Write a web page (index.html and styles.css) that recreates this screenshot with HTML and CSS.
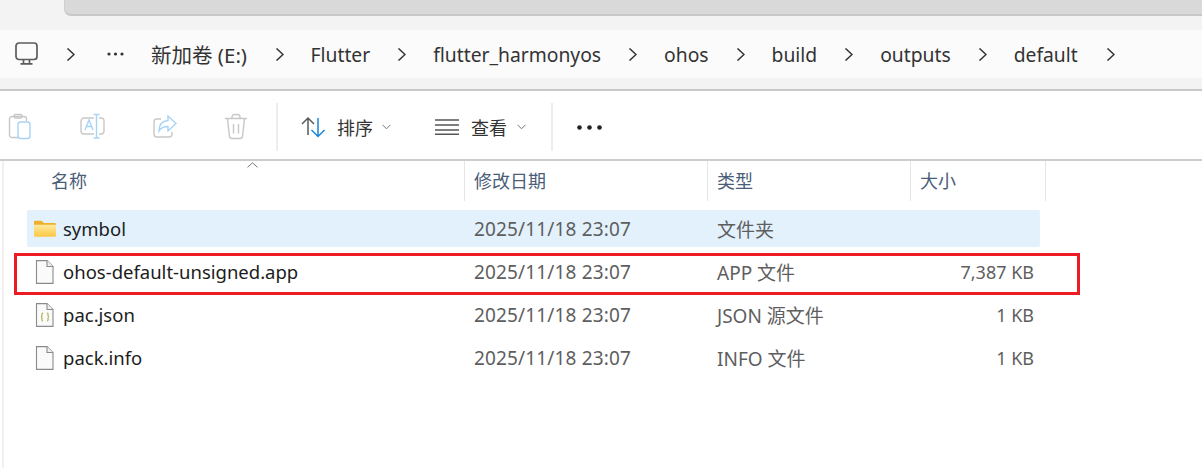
FILE: index.html
```html
<!DOCTYPE html>
<html lang="zh-CN">
<head>
    <meta charset="UTF-8">
    <title>default</title>
    <link rel="stylesheet" href="styles.css">
</head>
<body>
    <div class="tabstrip"><div class="tab"></div></div>

    <div class="address-wrap">
        <div class="address">
            <svg class="pc" width="24" height="24" viewBox="0 0 24 24" fill="none" stroke="#5c5c5c" stroke-width="1.7">
                <rect x="1" y="1" width="21" height="16.500" rx="3"/>
                <path d="M8.500 18v3.500M14.500 18v3.500M5.500 21.800h12"/>
            </svg>
            <svg class="chev" width="9" height="13" viewBox="0 0 9 13"><path d="M1.500 .5l6.500 6-6.500 6"/></svg>
            <svg class="dots" width="17" height="4" viewBox="0 0 17 4"><circle cx="2" cy="2" r="1.600"/><circle cx="8.500" cy="2" r="1.600"/><circle cx="15" cy="2" r="1.600"/></svg>
            <span class="crumb drive">新加卷 (E:)</span>
            <svg class="chev" width="9" height="13" viewBox="0 0 9 13"><path d="M1.500 .5l6.500 6-6.500 6"/></svg>
            <span class="crumb">Flutter</span>
            <svg class="chev" width="9" height="13" viewBox="0 0 9 13"><path d="M1.500 .5l6.500 6-6.500 6"/></svg>
            <span class="crumb">flutter_harmonyos</span>
            <svg class="chev" width="9" height="13" viewBox="0 0 9 13"><path d="M1.500 .5l6.500 6-6.500 6"/></svg>
            <span class="crumb">ohos</span>
            <svg class="chev" width="9" height="13" viewBox="0 0 9 13"><path d="M1.500 .5l6.500 6-6.500 6"/></svg>
            <span class="crumb">build</span>
            <svg class="chev" width="9" height="13" viewBox="0 0 9 13"><path d="M1.500 .5l6.500 6-6.500 6"/></svg>
            <span class="crumb">outputs</span>
            <svg class="chev" width="9" height="13" viewBox="0 0 9 13"><path d="M1.500 .5l6.500 6-6.500 6"/></svg>
            <span class="crumb last">default</span>
            <svg class="chev" width="9" height="13" viewBox="0 0 9 13"><path d="M1.500 .5l6.500 6-6.500 6"/></svg>
        </div>
    </div>

    <div class="toolbar">
        <div class="tool-icons">
            <svg width="26" height="28" viewBox="0 0 26 28" fill="none" stroke-width="1.4">
                <path d="M10 24.500H4a2.500 2.500 0 0 1-2.500-2.500V6A2.500 2.500 0 0 1 4 3.500h12A2.500 2.500 0 0 1 18.500 6v2" stroke="#c8c8c8"/>
                <rect x="6" y="1.500" width="8" height="3.500" rx="1.500" stroke="#c8c8c8"/>
                <rect x="10" y="9" width="12" height="16.500" rx="2.500" stroke="#a9d3f5"/>
            </svg>
            <svg width="26" height="28" viewBox="0 0 26 28" fill="none" stroke-width="1.4">
                <path d="M14 5H4a3 3 0 0 0-3 3v10a3 3 0 0 0 3 3h10M19 5h2a3 3 0 0 1 3 3v10a3 3 0 0 1-3 3h-2" stroke="#c8c8c8"/>
                <path d="M13.500 1.500h6M16.500 1.500v23M13.500 25h6" stroke="#a9d3f5"/>
                <path d="M5 17l4-10 4 10M6.500 13.500h5" stroke="#a9d3f5"/>
            </svg>
            <svg width="26" height="28" viewBox="0 0 26 28" fill="none" stroke-width="1.4">
                <path d="M9 6H5a3 3 0 0 0-3 3v12a3 3 0 0 0 3 3h12a3 3 0 0 0 3-3v-2" stroke="#c8c8c8"/>
                <path d="M16 3l8 7.500-8 7.500v-4.500c-4 0-7 1-9 4.500 0-6 3-10 9-10.500z" stroke="#a9d3f5"/>
            </svg>
            <svg width="26" height="28" viewBox="1 0 26 28" fill="none" stroke="#c8c8c8" stroke-width="1.4">
                <path d="M2 5.500h22M9 5.500V4a2.500 2.500 0 0 1 2.500-2.500h3A2.500 2.500 0 0 1 17 4v1.500M4.500 5.500l2 18a2.500 2.500 0 0 0 2.500 2h8a2.500 2.500 0 0 0 2.500-2l2-18M10.500 11v9.500M15.500 11v9.500"/>
            </svg>
        </div>
        <div class="tool-sep"></div>
        <div class="tool-btn sort">
            <svg width="25" height="22" viewBox="0 0 25 22" fill="none" stroke-width="1.5">
                <path d="M7 19V2M1 8l6-6 6 6" stroke="#5a5a5a"/>
                <path d="M17 2v18M10.500 14l6.500 6.500 6.500-6.500" stroke="#1a86d8"/>
            </svg>
            <span>排序</span>
            <svg class="caret" width="9" height="6" viewBox="0 0 9 6"><path d="M.5 .8l4 4 4-4"/></svg>
        </div>
        <div class="tool-btn view">
            <svg width="24" height="16" viewBox="0 0 24 16" stroke="#555" stroke-width="1.4">
                <path d="M0 1h24M0 6h24M0 11h24M0 15.300h24"/>
            </svg>
            <span>查看</span>
            <svg class="caret" width="9" height="6" viewBox="0 0 9 6"><path d="M.5 .8l4 4 4-4"/></svg>
        </div>
        <div class="tool-sep second"></div>
        <svg class="more" width="25" height="5" viewBox="0 0 25 5"><circle cx="2.500" cy="2.500" r="2.300"/><circle cx="12.500" cy="2.500" r="2.300"/><circle cx="22.500" cy="2.500" r="2.300"/></svg>
    </div>

    <div class="files">
        <div class="head">
            <div class="head-name">名称<svg class="sort-mark" width="11" height="6" viewBox="0 0 11 6"><path d="M.5 5.300l5-4.500 5 4.500"/></svg></div>
            <div class="head-cell">修改日期</div>
            <div class="head-cell">类型</div>
            <div class="head-cell">大小</div>
        </div>

        <div class="rows">
            <div class="row selected">
                <div class="name">
                    <svg class="folder" width="22" height="17" viewBox="0 0 24 18">
                        <defs>
                            <linearGradient id="folderFill" x1="0" y1="0" x2="0" y2="1">
                                <stop offset="0" stop-color="#ffe9a0"/>
                                <stop offset="1" stop-color="#fbc842"/>
                            </linearGradient>
                        </defs>
                        <path d="M0 2a1.500 1.500 0 0 1 1.500-1.500h6.500l3 2.500h11.500A1.500 1.500 0 0 1 24 4.500V6H0z" fill="#eeb02a"/>
                        <path d="M0 5h24v11.500a1.500 1.500 0 0 1-1.500 1.500h-21A1.500 1.500 0 0 1 0 16.500z" fill="url(#folderFill)"/>
                    </svg>
                    symbol
                </div>
                <div class="cell date">2025/11/18 23:07</div>
                <div class="cell type">文件夹</div>
                <div class="cell size"></div>
            </div>
            <div class="row">
                <div class="name">
                    <svg width="24" height="24" viewBox="0 0 24 24" fill="#fafafa" stroke="#8a8a8a" stroke-width="1.1">
                        <path d="M3.500 .6h10.500L20 6.500V23.400H3.500z"/><path d="M14 .6V6.500h6" fill="#eee"/>
                    </svg>
                    ohos-default-unsigned.app
                </div>
                <div class="cell date">2025/11/18 23:07</div>
                <div class="cell type">APP 文件</div>
                <div class="cell size">7,387 KB</div>
            </div>
            <div class="row">
                <div class="name">
                    <svg width="24" height="24" viewBox="0 0 24 24" fill="#fafafa" stroke="#8a8a8a" stroke-width="1.1">
                        <path d="M3.500 .6h10.500L20 6.500V23.400H3.500z"/><path d="M14 .6V6.500h6" fill="#eee"/>
                        <path d="M10 10c-1.500 0-1 1.500-1 2.500s-.5 1.500-1 1.500c.5 0 1 .5 1 1.500s-.5 2.500 1 2.500M14 10c1.500 0 1 1.500 1 2.500s.5 1.500 1 1.500c-.5 0-1 .5-1 1.500s.5 2.500-1 2.500" fill="none" stroke="#a9ad3c"/>
                    </svg>
                    pac.json
                </div>
                <div class="cell date">2025/11/18 23:07</div>
                <div class="cell type">JSON 源文件</div>
                <div class="cell size">1 KB</div>
            </div>
            <div class="row">
                <div class="name">
                    <svg width="24" height="24" viewBox="0 0 24 24" fill="#fafafa" stroke="#8a8a8a" stroke-width="1.1">
                        <path d="M3.500 .6h10.500L20 6.500V23.400H3.500z"/><path d="M14 .6V6.500h6" fill="#eee"/>
                    </svg>
                    pack.info
                </div>
                <div class="cell date">2025/11/18 23:07</div>
                <div class="cell type">INFO 文件</div>
                <div class="cell size">1 KB</div>
            </div>
            <div class="mark"></div>
        </div>
    </div>
</body>
</html>
```

FILE: styles.css
```css
html, body {
    margin: 0;
    height: 468px;
    overflow: hidden;
    background-color: #fff;
}
body {
    font-family: "Noto Sans", "Noto Sans CJK SC", sans-serif;
    font-size: 18.5px;
    color: #1c1c1c;
}
.tabstrip {
    height: 30px;
    padding-left: 64px;
    background-color: #f3f3f3;
}
.tab {
    height: 16px;
    box-sizing: border-box;
    background-color: #d9d9d9;
    border-left: 1px solid #cfcfcf;
    border-bottom: 2px solid #c8c8c8;
    border-bottom-left-radius: 7px;
}
.address-wrap {
    height: 61px;
    box-sizing: border-box;
    padding-bottom: 11px;
    background-color: #f3f3f3;
    border-bottom: 2px solid #c8c8c8;
}
.address {
    height: 48px;
    display: flex;
    align-items: center;
    gap: 27px;
    padding-left: 15px;
    background-color: #fbfbfb;
}
.pc {
    margin-right: 0;
}
.chev {
    flex: none;
    fill: none;
    stroke: #333;
    stroke-width: 1.5;
}
.dots {
    flex: none;
    fill: #333;
    margin-left: 5px;
}
.crumb {
    color: #333;
    font-size: 19.3px;
    white-space: nowrap;
}
.crumb.drive {
    font-size: 20.5px;
    margin-right: .5px;
}
.crumb.last {
    margin-right: 1.5px;
}
.toolbar {
    height: 70px;
    box-sizing: border-box;
    display: flex;
    align-items: center;
    border-bottom: 2px solid #cdcdcd;
    padding: 4px 0 0 8px;
}
.tool-icons {
    display: flex;
    gap: 46px;
    width: 268px;
}
.tool-sep {
    width: 2px;
    height: 48px;
    background-color: #ededed;
}
.tool-sep.second {
    margin-left: 25px;
}
.tool-btn {
    display: flex;
    align-items: center;
    gap: 11px;
    font-size: 18px;
    color: #333;
}
.sort {
    margin-left: 23px;
}
.view {
    margin-left: 44px;
    gap: 12px;
}
.caret {
    fill: none;
    stroke: #777;
    stroke-width: 1;
    margin-left: -2px;
}
.more {
    fill: #222;
    margin-left: 24px;
}
.files {
    border-left: 2px solid #f0f0f0;
    margin-left: 2px;
    height: 307px;
}
.head {
    display: grid;
    grid-template-columns: 461px 243px 203px 135px;
    height: 40px;
    font-size: 18px;
    color: #4a5d78;
}
.head-name {
    position: relative;
    padding-left: 47px;
    line-height: 40px;
    border-right: 1px solid #e5e5e5;
}
.sort-mark {
    position: absolute;
    left: 243px;
    top: 1px;
    fill: none;
    stroke: #777;
    stroke-width: 1;
}
.head-cell {
    padding-left: 9px;
    line-height: 40px;
    border-right: 1px solid #e5e5e5;
}
.rows {
    position: relative;
    padding: 9px 0 0 23px;
}
.row {
    display: grid;
    grid-template-columns: 437px 243px 203px 130px;
    width: 1013px;
    height: 37px;
    margin-bottom: 6px;
    align-items: center;
    border-radius: 2px;
}
.row.selected {
    background-color: #e2f1fc;
}
.name {
    display: flex;
    align-items: center;
    gap: 6px;
    padding-left: 6px;
}
.folder {
    margin: 0 1px;
}
.cell {
    padding-left: 10px;
    font-size: 18px;
    color: #5e5e5e;
}
.date {
    font-size: 19px;
    letter-spacing: .15px;
}
.type {
    font-size: 19px;
}
.size {
    padding: 0 6px 0 0;
    text-align: right;
}
.mark {
    position: absolute;
    left: 10px;
    top: 52px;
    width: 1066px;
    height: 42px;
    box-sizing: border-box;
    border: 3px solid #ed1c24;
}
```
